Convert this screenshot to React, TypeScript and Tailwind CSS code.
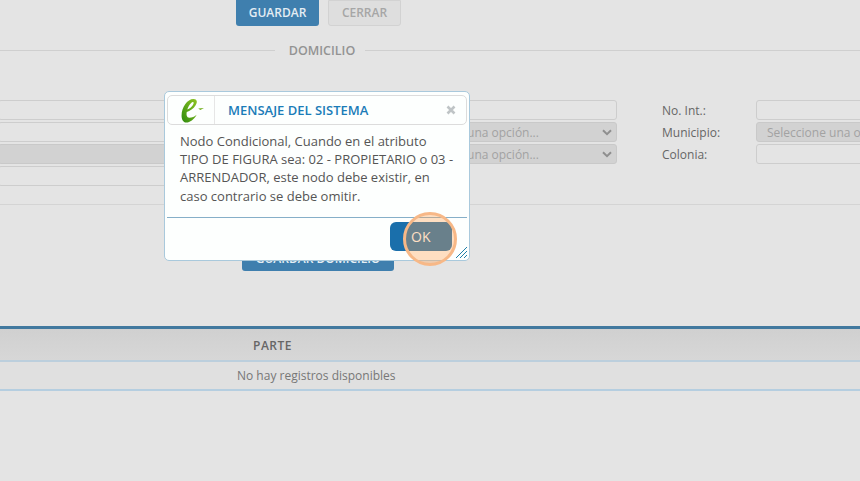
import React from "react";

const inputCls = "h-5 rounded-[3px] border border-[#cdcdcd] bg-[#e4e4e4]";
const shadedCls = "h-5 rounded-[3px] border border-[#c9c9c9] bg-[#d2d2d2]";

function Chevron() {
  return (
    <svg width="10" height="7" viewBox="0 0 10 7" className="absolute right-[4px] top-[6px]">
      <path d="M1 1.2 L5 5.2 L9 1.2" fill="none" stroke="#8f8f8f" strokeWidth="2" />
    </svg>
  );
}

function SelectBox({ className }: { className: string }) {
  return (
    <div className={`relative flex items-center pl-[10px] pt-[2px] text-[12px] leading-none text-[#a2a2a2] whitespace-nowrap overflow-hidden ${shadedCls} ${className}`}>
      Seleccione una opción...
      <Chevron />
    </div>
  );
}

function Row({ left, mid, label, right }: { left: React.ReactNode; mid?: React.ReactNode; label?: string; right?: React.ReactNode }) {
  return (
    <div className="flex h-5 items-center">
      <div className="w-[250px] shrink-0 -ml-[2px] mr-[146px]">{left}</div>
      <div className="w-[223px] shrink-0">{mid}</div>
      <div className="ml-[45px] w-[94px] shrink-0 pt-[2px] text-[12px] leading-none text-[#666666]">{label}</div>
      {right}
    </div>
  );
}

function Logo() {
  return (
    <svg width="25" height="25" viewBox="0 0 24 24" className="shrink-0">
      <defs>
        <linearGradient id="lg" x1="0" y1="1" x2="1" y2="0">
          <stop offset="0" stopColor="#2e8a0e" />
          <stop offset="1" stopColor="#8fc423" />
        </linearGradient>
      </defs>
      <path
        d="M1.5 17 C1.5 9 7 1 13 1 C16.5 1 17 4 15 7 C13 10.5 9.5 12.5 6.5 13.5 C6 16 6.3 19 9 19 C11.5 19 14 17.5 16 16 C13.5 20.5 9.5 23.5 6 23.5 C3 23.5 1.5 20.5 1.5 17 Z M7 11 C9 10.5 12 8 13 5.5 C13.5 3.5 12 3.5 10.5 5 C9 6.5 7.8 8.8 7 11 Z"
        fill="url(#lg)"
        fillRule="evenodd"
      />
      <path d="M17.5 10 L23 9.6 L19.5 11.5 Z" fill="#6fae1a" />
    </svg>
  );
}

function Dialog() {
  return (
    <div className="absolute left-[164px] top-[91px] h-[170px] w-[306px] rounded-[5px] border border-[#a9c9dc] bg-[#fdfffe] px-[2px] pt-[3px]">
      <div className="flex h-[30px] items-center rounded-[5px] border border-[#dcdcdc] pl-[12px]">
        <Logo />
        <div className="ml-[9px] h-full w-px bg-[#e6e6e6]" />
        <div className="ml-[13px] text-[13px] font-semibold leading-none text-[#1b7cb8]">MENSAJE DEL SISTEMA</div>
        <svg width="10" height="10" viewBox="0 0 10 10" className="ml-auto mr-[10px]">
          <path d="M1.5 1.5 L8.5 8.5 M8.5 1.5 L1.5 8.5" stroke="#bfc4c6" strokeWidth="2.6" />
        </svg>
      </div>
      <div className="mt-[7px] h-[85px] w-[288px] pl-[13px] text-[13px] leading-[18.2px] text-[#555555]">
        Nodo Condicional, Cuando en el atributo TIPO DE FIGURA sea: 02 - PROPIETARIO o 03 - ARRENDADOR, este nodo debe existir, en caso contrario se debe omitir.
      </div>
      <div className="h-px bg-[#86afc8]" />
      <div className="flex justify-end pr-[15px] pt-[4px]">
        <div className="flex h-[29px] w-[62px] items-center rounded-[6px] bg-[#1a6fab] pl-[21px] text-[14px] leading-none text-white">
          OK
        </div>
      </div>
      <svg width="13" height="13" viewBox="0 0 13 13" className="absolute bottom-[1px] right-[1px]">
        <path d="M1 12 L12 1 M5 12 L12 5 M9 12 L12 9" stroke="#1f7fa8" strokeWidth="1" />
      </svg>
    </div>
  );
}

export default function App() {
  return (
    <div className="relative h-[481px] w-[860px] overflow-hidden bg-[#e4e4e4] font-['Open_Sans',sans-serif]">
      <div className="flex flex-col">
        <div className="flex h-[26px] gap-[9px] pl-[236px]">
          <div className="flex h-full w-[83px] items-center justify-center rounded-b-[3px] bg-[#3f7fae] text-[12px] font-semibold leading-none text-[#e4edf3]">
            GUARDAR
          </div>
          <div className="flex h-full w-[73px] items-center justify-center rounded-b-[3px] border border-[#d2d2d2] bg-[#dedede] text-[12px] font-semibold leading-none text-[#a6a6a6]">
            CERRAR
          </div>
        </div>

        <div className="mt-[17px] flex h-[15px] items-center">
          <div className="h-px w-[275px] bg-[#cfcfcf]" />
          <div className="w-[90px] pl-[4px] pt-[2px] text-center text-[12.5px] font-semibold leading-none text-[#939393]">DOMICILIO</div>
          <div className="h-px flex-1 bg-[#cfcfcf]" />
        </div>

        <div className="mt-[42px] flex flex-col gap-[2px]">
          <Row left={<div className={inputCls} />} mid={<div className={inputCls} />} label="No. Int.:" right={<div className={`${inputCls} w-[200px] shrink-0`} />} />
          <Row left={<div className={inputCls} />} mid={<SelectBox className="" />} label="Municipio:" right={<SelectBox className="w-[200px] shrink-0" />} />
          <Row left={<div className={shadedCls} />} mid={<SelectBox className="" />} label="Colonia:" right={<div className={`${inputCls} w-[200px] shrink-0`} />} />
          <Row left={<div className={inputCls} />} />
        </div>

        <div className="mt-[18px] h-px bg-[#d4d4d4]" />

        <div className="mt-[42px] pl-[242px]">
          <div className="flex h-[24px] w-[152px] items-center justify-center rounded-[3px] bg-[#3f7fae] text-[12px] font-semibold leading-none text-[#e4edf3]">
            GUARDAR DOMICILIO
          </div>
        </div>

        <div className="mt-[55px] border-t-[3px] border-[#42799f]">
          <div className="flex h-[33px] items-center border-b-2 border-[#bccfdd] bg-gradient-to-b from-[#d0d0d0] to-[#d7d7d7] pl-[253px] pt-[3px] text-[12px] font-semibold leading-none tracking-[0.5px] text-[#666666]">
            PARTE
          </div>
          <div className="flex h-[29px] items-center border-b-2 border-[#b5cee0] bg-[#e0e0e0] pl-[237px] text-[12px] leading-none text-[#777777]">
            No hay registros disponibles
          </div>
        </div>
      </div>

      <Dialog />

      <div className="absolute left-[403px] top-[212px] h-[54px] w-[54px] rounded-full border-[3px] border-[#f7b887] bg-[#ffa050]/35" />
    </div>
  );
}
